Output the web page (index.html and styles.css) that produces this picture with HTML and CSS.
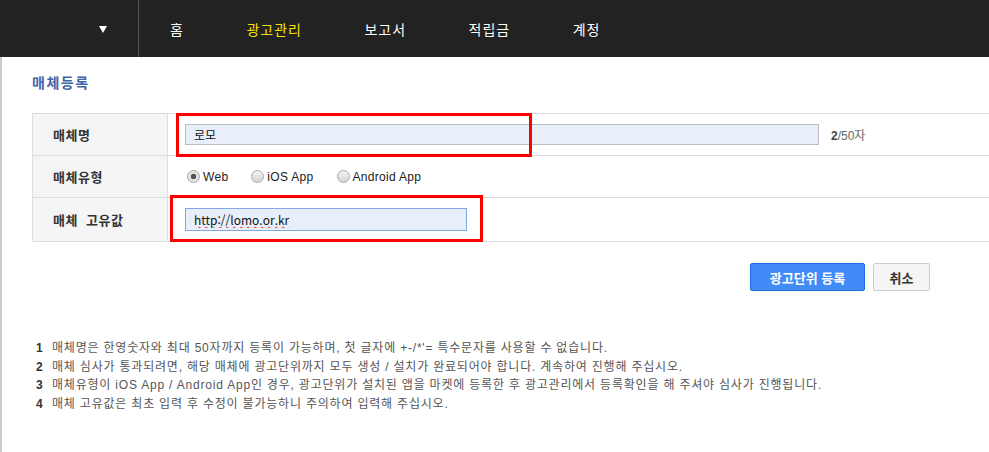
FILE: index.html
```html
<!DOCTYPE html>
<html lang="ko">
<head>
    <meta charset="UTF-8">
    <meta name="viewport" content="width=device-width, initial-scale=1.0">
    <title>매체등록</title>
    <link rel="stylesheet" href="styles.css">
</head>
<body>

    <!-- Top Navigation -->
    <header class="gnb">
        <div class="gnb-menu"><span class="gnb-caret"></span></div>
        <ul class="gnb-list">
            <li><a href="#">홈</a></li>
            <li class="active"><a href="#">광고관리</a></li>
            <li><a href="#">보고서</a></li>
            <li><a href="#">적립금</a></li>
            <li><a href="#">계정</a></li>
        </ul>
    </header>

    <!-- Content -->
    <div class="content">
        <h2 class="page-title">매체등록</h2>

        <table class="form-table">
            <tr class="row-name">
                <th>매체명</th>
                <td>
                    <div class="field">
                        <input type="text" class="input-field input-long" value="로모">
                        <span class="counter"><b>2</b>/50자</span>
                        <span class="mark mark-name"></span>
                    </div>
                </td>
            </tr>
            <tr class="row-type">
                <th>매체유형</th>
                <td>
                    <div class="field radios">
                        <label><input type="radio" name="type" checked> Web</label>
                        <label><input type="radio" name="type"> iOS App</label>
                        <label><input type="radio" name="type"> Android App</label>
                    </div>
                </td>
            </tr>
            <tr class="row-key">
                <th>매체 고유값</th>
                <td>
                    <div class="field">
                        <input type="text" class="input-field input-short focus" value="http://lomo.or.kr">
                        <span class="mark mark-key"></span>
                    </div>
                </td>
            </tr>
        </table>

        <div class="btn-area">
            <button type="button" class="btn btn-primary">광고단위 등록</button>
            <button type="button" class="btn btn-default">취소</button>
        </div>

        <ol class="notes">
            <li><b>1</b>매체명은 한영숫자와 최대 50자까지 등록이 가능하며, 첫 글자에 +-/*'= 특수문자를 사용할 수 없습니다.</li>
            <li><b>2</b>매체 심사가 통과되려면, 해당 매체에 광고단위까지 모두 생성 / 설치가 완료되어야 합니다. 계속하여 진행해 주십시오.</li>
            <li><b>3</b>매체유형이 iOS App / Android App인 경우, 광고단위가 설치된 앱을 마켓에 등록한 후 광고관리에서 등록확인을 해 주셔야 심사가 진행됩니다.</li>
            <li><b>4</b>매체 고유값은 최초 입력 후 수정이 불가능하니 주의하여 입력해 주십시오.</li>
        </ol>
    </div>

</body>
</html>
```

FILE: styles.css
```css
/* General Reset */
* {
    margin: 0;
    padding: 0;
    box-sizing: border-box;
}

body {
    font-family: "Liberation Sans", "Noto Sans CJK KR", sans-serif;
    font-size: 12px;
    color: #333;
    background: #fff;
    overflow: hidden;
}

/* Top Navigation */
.gnb {
    display: flex;
    height: 57px;
    background-color: #222;
}

.gnb-menu {
    width: 139px;
    border-right: 1px solid #555;
    display: flex;
    align-items: center;
    justify-content: center;
    padding-left: 68px;
    padding-top: 1px;
}

.gnb-caret {
    width: 0;
    height: 0;
    border-left: 4px solid transparent;
    border-right: 4px solid transparent;
    border-top: 7px solid #fff;
}

.gnb-list {
    display: flex;
    list-style: none;
}

.gnb-list li {
    display: flex;
    align-items: center;
    padding: 0 31.5px 0 31px;
}

.gnb-list a {
    font-family: "Noto Sans CJK KR", sans-serif;
    font-size: 14px;
    letter-spacing: 1px;
    color: #fff;
    text-decoration: none;
}

.gnb-list .active a {
    color: #f5e100;
}

/* Content */
.content {
    border-left: 2px solid #ccc;
    padding-left: 30px;
    height: calc(100vh - 57px);
    overflow: hidden;
}

.page-title {
    font-family: "Noto Sans CJK KR", sans-serif;
    font-size: 14px;
    font-weight: bold;
    letter-spacing: 1.5px;
    color: #4263a8;
    padding-top: 15px;
    height: 56px;
}

/* Form Table */
.form-table {
    width: 1000px;
    border-collapse: collapse;
    border-top: 1px solid #ddd;
}

.form-table th,
.form-table td {
    border-bottom: 1px solid #ddd;
    vertical-align: middle;
}

.form-table th {
    width: 135px;
    padding-left: 20px;
    text-align: left;
    font-family: "Noto Sans CJK KR", sans-serif;
    font-size: 13px;
    font-weight: bold;
    letter-spacing: 0.5px;
    word-spacing: 4px;
    color: #333;
    background-color: #f5f5f5;
    border-left: 1px solid #ddd;
    border-right: 1px solid #ddd;
}

.row-name th, .row-name td { height: 42px; }
.row-type th, .row-type td { height: 42px; }
.row-key th, .row-key td { height: 44px; }

.field {
    position: relative;
    display: flex;
    align-items: center;
    padding-left: 17px;
}

.input-field {
    height: 21px;
    padding: 0 8px;
    border: 1px solid #b9bec6;
    background-color: #e8effa;
    font-family: "Noto Sans CJK KR", sans-serif;
    font-size: 12px;
    color: #111;
    outline: none;
}

.input-long {
    width: 634px;
}

.input-short {
    width: 282px;
    height: 23px;
}

.input-field.focus {
    border-color: #82a8e6;
    text-decoration: underline wavy #e33;
    text-decoration-thickness: 1px;
}

.counter {
    margin-left: 12px;
    color: #666;
    font-size: 12px;
}

.counter b {
    color: #444;
}

/* Radio Buttons */
.radios {
    padding-left: 19px;
}

.radios label {
    display: flex;
    align-items: center;
    margin-right: 23px;
    font-size: 12px;
    letter-spacing: 0.3px;
    color: #222;
}

.radios input {
    appearance: none;
    width: 13px;
    height: 13px;
    margin-right: 3px;
    border: 1px solid #aaa;
    border-radius: 50%;
    background: linear-gradient(#f4f4f4, #d4d4d4);
}

.radios input:checked {
    background: radial-gradient(circle, #555 0, #555 2.5px, #ddd 3px, #eee 100%);
}

/* Red annotation boxes */
.mark {
    position: absolute;
    border: 3px solid #f00;
    pointer-events: none;
}

.mark-name {
    left: 8px;
    top: -11px;
    width: 356px;
    height: 44px;
}

.mark-key {
    left: 2px;
    top: -13px;
    width: 313px;
    height: 47px;
}

/* Buttons */
.btn-area {
    display: flex;
    justify-content: flex-end;
    gap: 8px;
    padding: 21px 59px 0 0;
    width: 957px;
}

.btn {
    height: 28px;
    border-radius: 2px;
    font-family: "Noto Sans CJK KR", sans-serif;
    font-size: 13px;
    font-weight: bold;
    cursor: pointer;
}

.btn-primary {
    width: 115px;
    color: #fff;
    background-color: #418bf9;
    border: 1px solid #1f6fe2;
}

.btn-default {
    width: 57px;
    color: #333;
    background-color: #f5f5f5;
    border: 1px solid #ccc;
}

/* Notes */
.notes {
    list-style: none;
    margin-top: 48px;
    padding-left: 4px;
    font-size: 12px;
    line-height: 18.5px;
    letter-spacing: 0.8px;
    color: #555;
}

.notes b {
    display: inline-block;
    width: 16px;
    letter-spacing: 0;
    color: #333;
}
```
